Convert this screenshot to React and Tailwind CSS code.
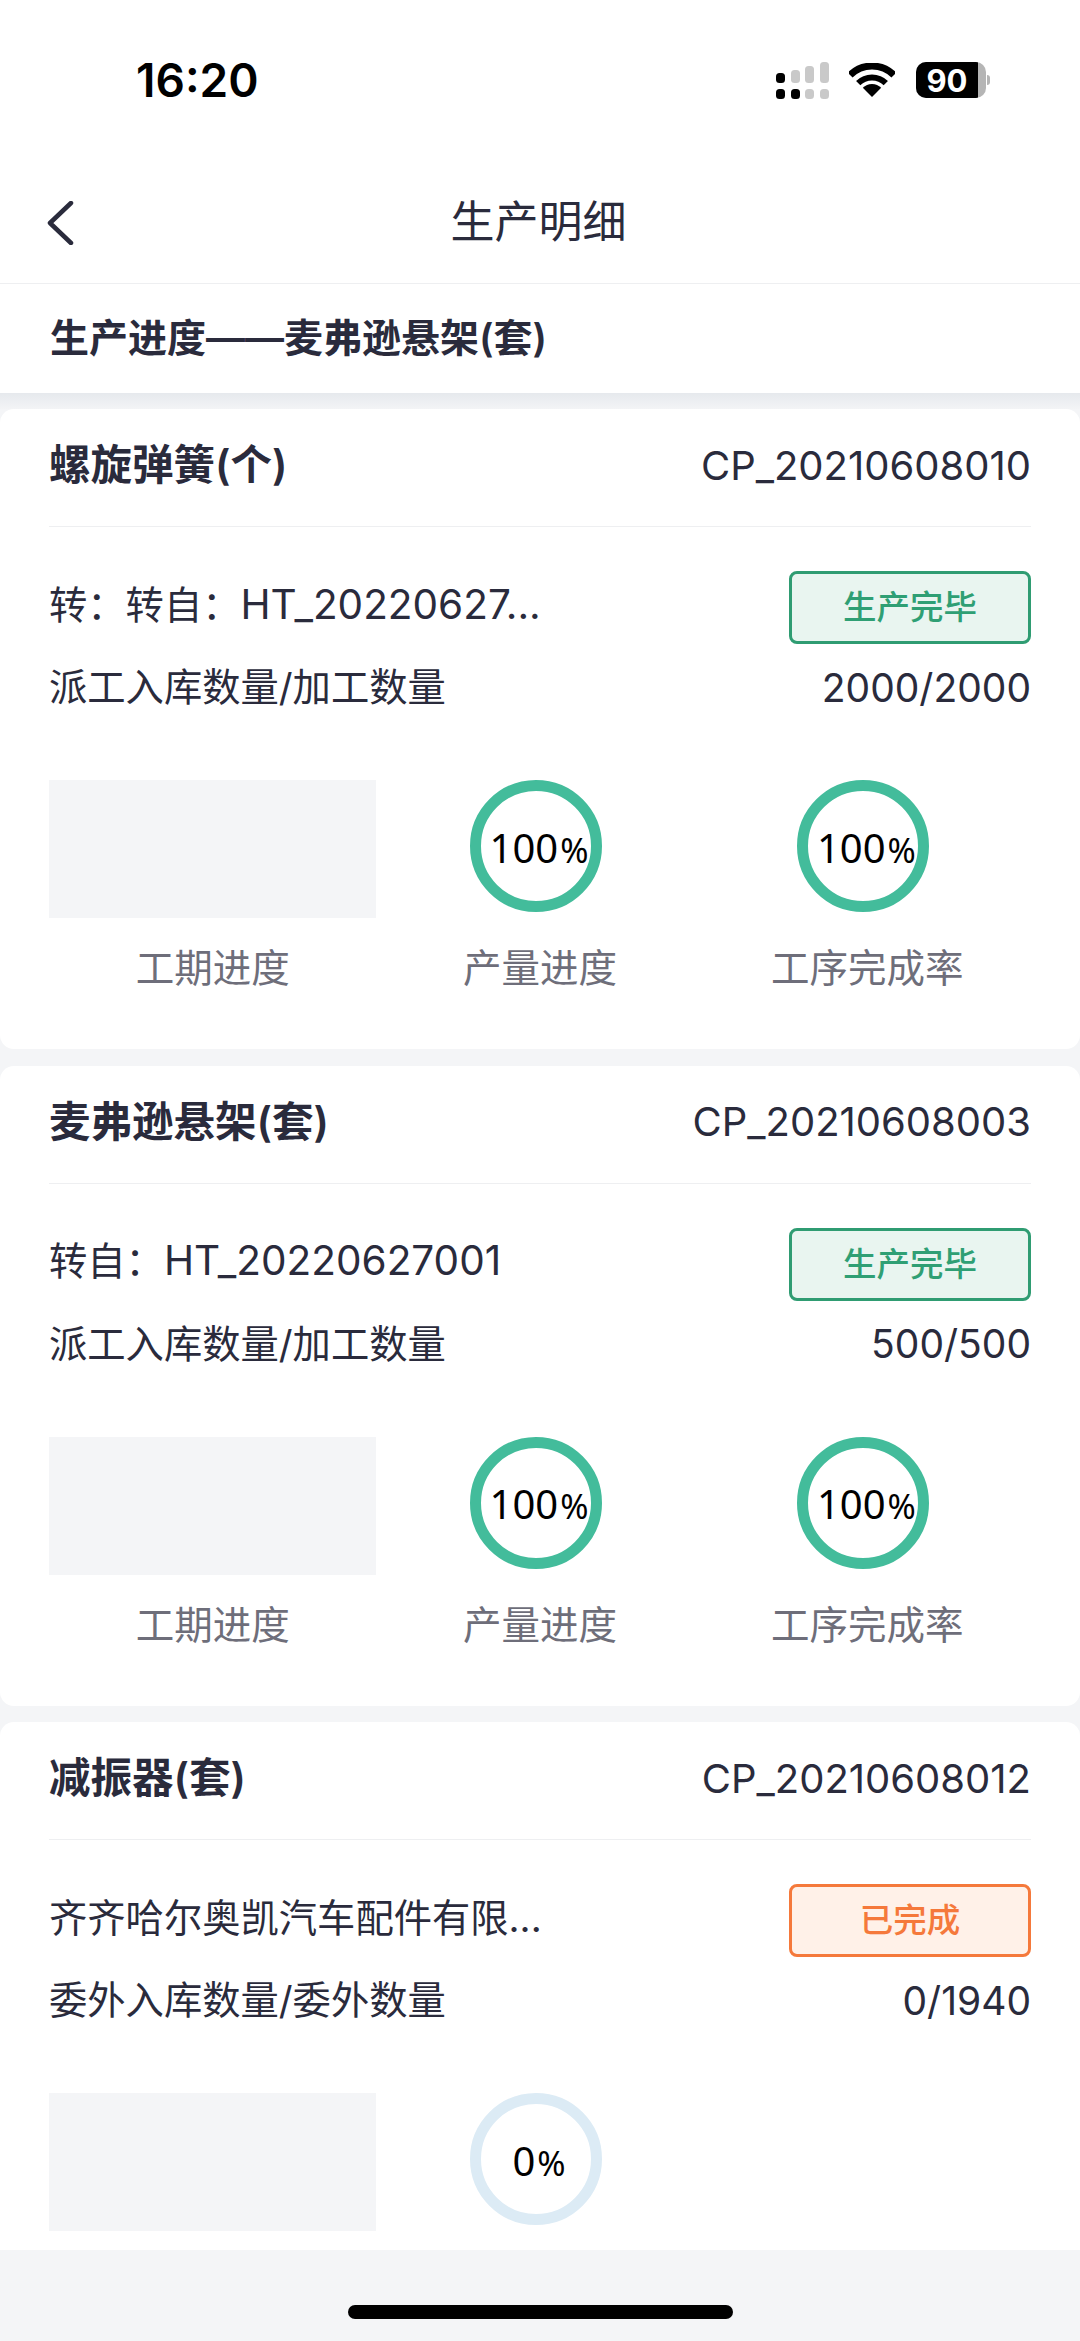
import React from 'react'

const cards = [
  {
    title: '螺旋弹簧(个)',
    code: 'CP_20210608010',
    fromLabel: '转：转自：',
    from: 'HT_20220627...',
    status: '生产完毕',
    tone: 'green',
    qtyLabel: '派工入库数量/加工数量',
    qty: '2000/2000',
    rings: [100, 100],
    labels: true,
  },
  {
    title: '麦弗逊悬架(套)',
    code: 'CP_20210608003',
    fromLabel: '转自：',
    from: 'HT_20220627001',
    status: '生产完毕',
    tone: 'green',
    qtyLabel: '派工入库数量/加工数量',
    qty: '500/500',
    rings: [100, 100],
    labels: true,
  },
  {
    title: '减振器(套)',
    code: 'CP_20210608012',
    fromLabel: '齐齐哈尔奥凯汽车配件有限...',
    from: '',
    status: '已完成',
    tone: 'orange',
    qtyLabel: '委外入库数量/委外数量',
    qty: '0/1940',
    rings: [0],
    labels: false, // below the fold
  },
]

function SignalIcon() {
  return (
    <svg width="53" height="37" viewBox="0 0 53 37">
      <rect x="0" y="11" width="9" height="10" rx="3.5" fill="#000" />
      <rect x="15" y="8" width="9" height="13" rx="3.5" fill="#c9c9c9" />
      <rect x="29" y="4" width="9" height="17" rx="3.5" fill="#c9c9c9" />
      <rect x="44" y="0" width="9" height="21" rx="3.5" fill="#c9c9c9" />
      <rect x="0" y="27" width="9" height="10" rx="3.5" fill="#000" />
      <rect x="15" y="27" width="9" height="10" rx="3.5" fill="#000" />
      <rect x="29" y="27" width="9" height="10" rx="3.5" fill="#c9c9c9" />
      <rect x="44" y="27" width="9" height="10" rx="3.5" fill="#c9c9c9" />
    </svg>
  )
}

function WifiIcon() {
  return (
    <svg width="46" height="34" viewBox="0 0 46 34" fill="none">
      <path d="M1.1 12.1A31 31 0 0 1 44.9 12.1" stroke="#000" strokeWidth="7" />
      <path d="M9.2 20.2A19.5 19.5 0 0 1 36.8 20.2" stroke="#000" strokeWidth="6" />
      <path d="M23 34L13.8 24.8A13 13 0 0 1 32.2 24.8Z" fill="#000" />
    </svg>
  )
}

function Battery() {
  return (
    <div className="ml-[1px] flex items-center">
      <div className="flex h-[36px] w-[70px] overflow-hidden rounded-[10px] bg-[#b5b5b5]">
        <div className="flex h-full w-[62px] items-center justify-center bg-black text-[31px] font-bold leading-none text-white">
          90
        </div>
      </div>
      <div className="ml-px h-[10px] w-[3px] rounded-r-full bg-[#b5b5b5]" />
    </div>
  )
}

function Ring({ value }) {
  const border = value === 100 ? 'border-[#43bc9b]' : 'border-[#dcebf5]'
  return (
    <div className={`-ml-[8px] flex h-[132px] w-[132px] items-center justify-center rounded-full border-[11px] pl-[6px] pt-[3px] font-['Noto_Sans',sans-serif] text-black ${border}`}>
      <span className="whitespace-nowrap leading-none">
        <span className="text-[40px]">{value}</span>
        <span className="ml-[2px] text-[34px]">%</span>
      </span>
    </div>
  )
}

function ProgressCard({ card }) {
  const badge =
    card.tone === 'green'
      ? 'border-[#2f9c72] bg-[#e9f5f0] text-[#2f9f74]'
      : 'border-[#f5793b] bg-[#fff1e8] text-[#f5793b]'

  return (
    <div className={`rounded-[14px] bg-white px-[49px] ${card.labels ? 'pb-[56px]' : 'pb-[40px]'}`}>
      <div className="flex h-[118px] items-center justify-between border-b border-[#eeeff1] pb-[4px] text-[#2a2b3c]">
        <span className="text-[41.5px] font-semibold">{card.title}</span>
        <span className="text-[40px]">{card.code}</span>
      </div>

      <div className="mt-[44px] flex h-[73px] items-center justify-between text-[38.3px] text-[#2a2b3c]">
        <span className="whitespace-nowrap pb-[5px]">
          {card.fromLabel}
          <span className="text-[40.5px]">{card.from}</span>
        </span>
        <span className={`flex h-[73px] w-[242px] items-center justify-center rounded-[8px] border-[3px] text-[33.5px] font-medium ${badge}`}>
          {card.status}
        </span>
      </div>
      <div className="mt-[19px] flex h-[50px] items-center justify-between text-[38.3px] text-[#2a2b3c]">
        <span>{card.qtyLabel}</span>
        <span className="text-[39px]">{card.qty}</span>
      </div>

      <div className="mt-[67px] grid grid-cols-3 text-center text-[38.5px] text-[#6e6e7a]">
        <div className="flex flex-col items-center">
          <div className="h-[138px] w-full bg-[#f4f5f7]" />
          {card.labels && <div className="mt-[25px] h-[50px] leading-[50px]">工期进度</div>}
        </div>
        <div className="flex flex-col items-center">
          <div className="h-[138px]">
            <Ring value={card.rings[0]} />
          </div>
          {card.labels && <div className="mt-[25px] h-[50px] leading-[50px]">产量进度</div>}
        </div>
        {card.rings[1] !== undefined && (
          <div className="flex flex-col items-center">
            <div className="h-[138px]">
              <Ring value={card.rings[1]} />
            </div>
            {card.labels && <div className="mt-[25px] h-[50px] leading-[50px]">工序完成率</div>}
          </div>
        )}
      </div>
    </div>
  )
}

export default function App() {
  return (
    <div className="flex h-[2341px] w-[1080px] flex-col overflow-hidden bg-[#f4f5f7] font-[Inter,'Noto_Sans_CJK_SC',sans-serif]">
      {/* Status bar */}
      <div className="flex h-[160px] shrink-0 items-center justify-between bg-white pl-[136px] pr-[90px]">
        <span className="text-[46px] font-semibold leading-none text-black">16:20</span>
        <div className="flex items-center gap-[20px]">
          <SignalIcon />
          <WifiIcon />
          <Battery />
        </div>
      </div>

      {/* Nav */}
      <div className="relative flex h-[124px] shrink-0 items-center justify-center border-b border-[#eeeff1] bg-white">
        <svg className="absolute left-[46px] top-[41px]" width="28" height="44" viewBox="0 0 28 44" fill="none">
          <path d="M25 2L4 22L25 42" stroke="#2a2b3c" strokeWidth="4.5" strokeLinecap="round" strokeLinejoin="round" />
        </svg>
        <span className="mr-[3px] text-[44px] text-[#2a2b3c]">生产明细</span>
      </div>

      <div className="flex h-[109px] shrink-0 items-center bg-white px-[50px] text-[39px] font-semibold text-[#2a2b3c]">
        生产进度——麦弗逊悬架(套)
      </div>
      <div className="h-[16px] shrink-0 bg-gradient-to-b from-[#e6e9ed] to-[#f3f4f6]" />

      <div className="flex min-h-0 flex-1 flex-col gap-[16.5px] overflow-hidden">
        {cards.map((card) => (
          <ProgressCard key={card.code} card={card} />
        ))}
      </div>

      {/* Home indicator */}
      <div className="flex h-[91px] shrink-0 justify-center bg-[#f4f5f7] pt-[55px]">
        <div className="h-[14px] w-[385px] rounded-full bg-black" />
      </div>
    </div>
  )
}
